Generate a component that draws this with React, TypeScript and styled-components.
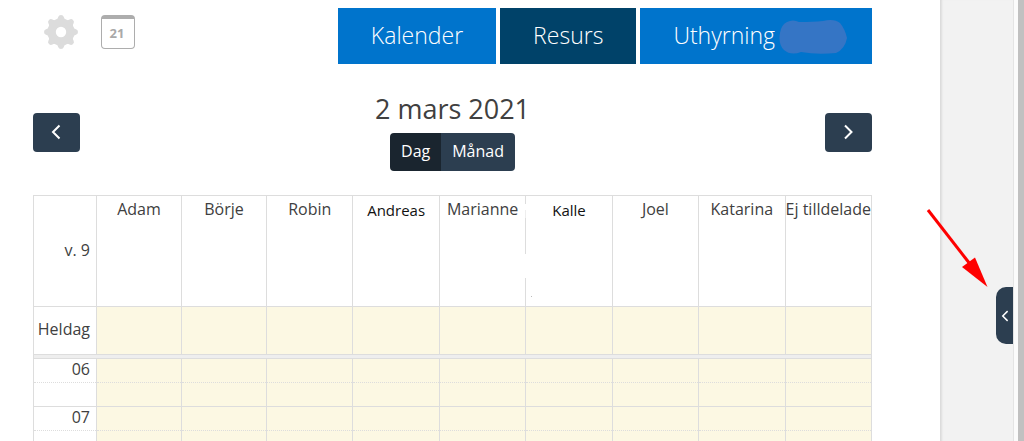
import React from "react";
import styled, { createGlobalStyle } from "styled-components";

const line = "#dddddd";
const navy = "#2c3e50";

const GlobalStyle = createGlobalStyle`
  * { box-sizing: border-box; }
  body { margin: 0; background: #fff; color: #404040; font: 16px/24px "Open Sans", "Noto Sans", sans-serif; }
  button { font: inherit; border: 0; margin: 0; cursor: pointer; }
`;

const Shell = styled.div`
  position: relative;
  display: flex;
  height: 100vh;
  overflow: hidden;
`;

const Main = styled.main`
  flex: 1;
  min-width: 0;
  padding: 8px 68px 0 33px;
`;

const SidePanel = styled.aside`
  display: flex;
  justify-content: flex-end;
  flex: 0 0 74px;
  padding-top: 287px;
  background: #f2f2f2;
  border-left: 1px solid #dcdcdc;
  border-right: 1px solid #e4e4e4;
  box-shadow: inset 2px 0 2px -1px #dddddd;
`;

const DrawerButton = styled.button`
  display: flex;
  align-items: center;
  justify-content: center;
  width: 17px;
  height: 57px;
  padding: 0;
  color: #fff;
  background: ${navy};
  border-radius: 10px 0 0 10px;
`;

const Gutter = styled.div`
  flex: 0 0 4px;
  background: #fbfbfb;
`;

const ScrollTrack = styled.div`
  flex: 0 0 6px;
  background: #c1c1c1;
`;

const TopBar = styled.header`
  display: flex;
  justify-content: space-between;
  align-items: flex-start;
`;

const Tools = styled.div`
  display: flex;
  gap: 22px;
  padding: 7px 0 0 10px;
`;

const ToolButton = styled.button`
  display: block;
  padding: 0;
  background: none;
`;

const TodayButton = styled.button`
  width: 34px;
  height: 34px;
  padding: 0 2px 2px 0;
  color: #a9a9a9;
  background: #fff;
  && {
    border: 1px solid #adadad;
    border-top-width: 4px;
    font-size: 13px;
    font-weight: 700;
    line-height: 24px;
  }
  border-radius: 4px;
`;

const Tabs = styled.nav`
  display: flex;
  gap: 4px;
`;

const Tab = styled.a<{ $active?: boolean }>`
  display: flex;
  align-items: center;
  gap: 4px;
  height: 56px;
  padding: 0 33px 2px;
  color: #fff;
  font-size: 23px;
  font-weight: 300;
  text-decoration: none;
  background: ${(p) => (p.$active ? "#004269" : "#0074cc")};
`;

const Blot = styled.svg`
  margin: 4px -8px 0 0;
`;

const Toolbar = styled.div`
  display: grid;
  grid-template-columns: 1fr auto 1fr;
  align-items: end;
  padding: 27px 0 24px;
`;

const Period = styled.div`
  display: flex;
  flex-direction: column;
  align-items: center;
  gap: 6px;
`;

const Title = styled.h1`
  margin: 0;
  font-size: 27px;
  font-weight: 400;
  line-height: 36px;
`;

const StepButton = styled.button<{ $end?: boolean }>`
  display: flex;
  align-items: center;
  justify-content: center;
  justify-self: ${(p) => (p.$end ? "end" : "start")};
  width: 47px;
  height: 39px;
  padding: 0 2px 2px 0;
  color: #fff;
  background: ${navy};
  border-radius: 4px;
  && {
    margin-bottom: 19px;
  }
`;

const ViewSwitch = styled.div`
  display: flex;
  border-radius: 4px;
  overflow: hidden;
`;

const ViewButton = styled.button<{ $active?: boolean }>`
  height: 38px;
  padding: 0 11px 2px;
  color: #fff;
  background: ${(p) => (p.$active ? "#1a252f" : navy)};
`;

const Grid = styled.table`
  width: 100%;
  table-layout: fixed;
  border-collapse: collapse;
  border: 1px solid ${line};
`;

const AxisCol = styled.col`
  width: 63px;
`;

const NarrowCol = styled.col`
  width: 85px;
`;

const HeadRow = styled.tr`
  height: 111px;
`;

const AllDayRow = styled.tr`
  height: 48px;
`;

const Axis = styled.th`
  padding: 0 6px 3px 0;
  font-weight: 400;
  line-height: 20px;
  text-align: right;
  vertical-align: middle;
  border: solid ${line};
  border-width: 1px 1px 0;
`;

const Resource = styled.th<{ $edited?: boolean }>`
  position: relative;
  padding: ${(p) => (p.$edited ? 2 : 1)}px 0 0;
  color: ${(p) => (p.$edited ? "#111" : "inherit")};
  font-size: ${(p) => (p.$edited ? 15 : 16)}px;
  font-weight: 400;
  white-space: nowrap;
  vertical-align: top;
  border: 1px solid ${line};
`;

const Slot = styled.td`
  padding: 0;
  background: #fcf8e3;
  border: solid ${line};
  border-width: 1px 1px 0;
`;

const SlotRow = styled.tr<{ $minor?: boolean }>`
  height: 24px;
  && > * {
    border-top-style: ${(p) => (p.$minor ? "dotted" : "solid")};
  }
`;

const Divider = styled.td`
  height: 4px;
  padding: 0;
  background: #eeeeee;
  border: 1px solid ${line};
`;

const Rubbing = styled.svg`
  position: absolute;
  top: 0;
  left: -4px;
`;

const Arrow = styled.svg`
  position: absolute;
  top: 205px;
  right: 32px;
`;

const Chevron = ({ right, size }: { right?: boolean; size: number }) => (
  <svg width={size} height={size} viewBox="0 0 16 16" fill="none" stroke="currentColor" strokeWidth="2" aria-hidden="true">
    <path d={right ? "M5 1.5 11.5 8 5 14.5" : "M11.5 1.5 5 8l6.500 6.500"} />
  </svg>
);

const lobes = [0, 45, 90, 135, 180, 225, 270, 315];

const Gear = () => (
  <svg width="36" height="34" viewBox="-18 -17 36 34" aria-hidden="true">
    <g fill="#dcdcdc">
      <path fillRule="evenodd" d="M0-13.500a13.500 13.500 0 1 0 0 27a13.500 13.500 0 1 0 0-27zM0-5.200a5.200 5.200 0 1 1 0 10.400a5.200 5.200 0 1 1 0-10.400z" />
      {lobes.map((a) => (
        <path key={a} transform={`rotate(${a})`} d="M-5-12Q-3.200-13-2.800-15Q-2.300-17 0-17Q2.300-17 2.800-15Q3.200-13 5-12z" />
      ))}
    </g>
  </svg>
);

const resources = ["Adam", "Börje", "Robin", "Andreas", "Marianne", "Kalle", "Joel", "Katarina", "Ej tilldelade"];
const edited = ["Andreas", "Kalle"];
const hours = ["06", "07"];

const Slots = () => (
  <>
    {resources.map((r) => (
      <Slot key={r} />
    ))}
  </>
);

export default function App() {
  return (
    <Shell>
      <GlobalStyle />
      <Main>
        <TopBar>
          <Tools>
            <ToolButton aria-label="Inställningar">
              <Gear />
            </ToolButton>
            <TodayButton>21</TodayButton>
          </Tools>
          <Tabs>
            <Tab href="#kalender">Kalender</Tab>
            <Tab href="#resurs" $active>Resurs</Tab>
            <Tab href="#uthyrning">
              Uthyrning
              <Blot width="68" height="36" viewBox="0 0 68 36" aria-hidden="true">
                <path fill="#3575c5" d="M8 3Q14 0 20 3Q34 3 44 2Q55-1 61 4Q66 10 68 19Q66 30 57 34Q38 36 22 33Q12 37 5 31Q-1 25 1 14Q2 6 8 3z" />
              </Blot>
            </Tab>
          </Tabs>
        </TopBar>
        <Toolbar>
          <StepButton aria-label="Föregående">
            <Chevron size={16} />
          </StepButton>
          <Period>
            <Title>2 mars 2021</Title>
            <ViewSwitch>
              <ViewButton $active>Dag</ViewButton>
              <ViewButton>Månad</ViewButton>
            </ViewSwitch>
          </Period>
          <StepButton $end aria-label="Nästa">
            <Chevron right size={16} />
          </StepButton>
        </Toolbar>
        <Grid>
          <colgroup>
            <AxisCol />
            <NarrowCol />
            <NarrowCol />
            <col span={7} />
          </colgroup>
          <thead>
            <HeadRow>
              <Axis scope="col">v. 9</Axis>
              {resources.map((r) => (
                <Resource key={r} scope="col" $edited={edited.includes(r)}>
                  {r}
                  {r === "Kalle" && (
                    <Rubbing width="12" height="108" aria-hidden="true">
                      <path fill="#fff" d="M1 8h6v6H1zM1 58h6v24H1z" />
                      <path fill="#fff" fillOpacity="0.5" d="M1 14h6v8H1z" />
                      <path fill="#bbb" d="M9 100h1v1H9z" />
                    </Rubbing>
                  )}
                </Resource>
              ))}
            </HeadRow>
          </thead>
          <tbody>
            <AllDayRow>
              <Axis scope="row">Heldag</Axis>
              <Slots />
            </AllDayRow>
            <tr>
              <Divider colSpan={10} />
            </tr>
            {hours.map((h) => (
              <React.Fragment key={h}>
                <SlotRow>
                  <Axis scope="row">{h}</Axis>
                  <Slots />
                </SlotRow>
                <SlotRow $minor>
                  <Axis as="td" />
                  <Slots />
                </SlotRow>
              </React.Fragment>
            ))}
          </tbody>
        </Grid>
      </Main>
      <SidePanel>
        <DrawerButton aria-label="Öppna panel">
          <Chevron size={12} />
        </DrawerButton>
      </SidePanel>
      <Gutter />
      <ScrollTrack />
      <Arrow width="70" height="90" viewBox="922 205 70 90" aria-hidden="true">
        <path d="M928 210 970 264" stroke="#fe0000" strokeWidth="3" />
        <path d="M962 267 975 257.500 987.500 287z" fill="#fe0000" />
      </Arrow>
    </Shell>
  );
}
